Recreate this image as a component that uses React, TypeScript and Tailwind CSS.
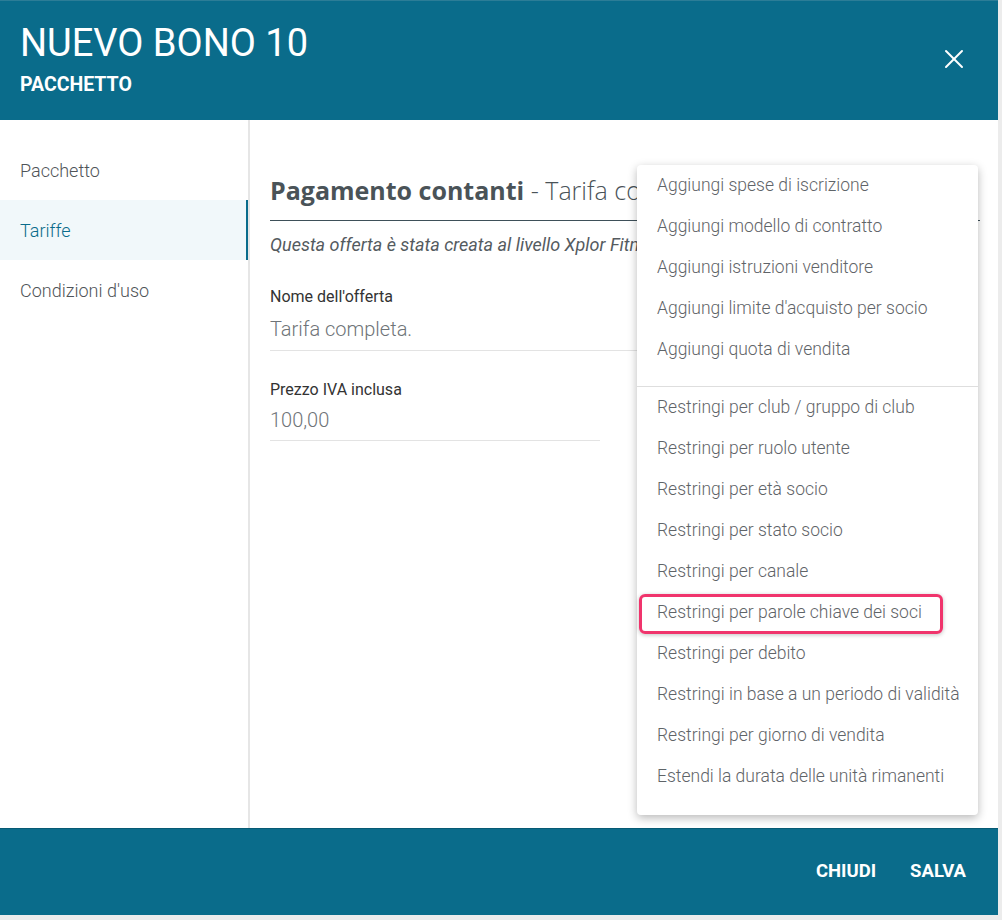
import { X } from 'lucide-react'

const addItems = [
  'Aggiungi spese di iscrizione',
  'Aggiungi modello di contratto',
  'Aggiungi istruzioni venditore',
  "Aggiungi limite d'acquisto per socio",
  'Aggiungi quota di vendita',
]

const restrictItems = [
  'Restringi per club / gruppo di club',
  'Restringi per ruolo utente',
  'Restringi per età socio',
  'Restringi per stato socio',
  'Restringi per canale',
  'Restringi per parole chiave dei soci',
  'Restringi per debito',
  'Restringi in base a un periodo di validità',
  'Restringi per giorno di vendita',
  'Estendi la durata delle unità rimanenti',
]

const navItems = ['Pacchetto', 'Tariffe', "Condizioni d'uso"]

function MenuRow({ label, highlight }: { label: string; highlight?: boolean }) {
  return (
    <div className="relative h-[41px] flex items-center px-5 text-[17.5px] font-light text-[#5f6468] whitespace-nowrap">
      {highlight && (
        <div className="absolute left-[2px] top-[2px] w-[304px] h-[40px] border-[3px] border-[#f0346c] rounded-[6px] shadow-[0_1px_4px_rgba(0,0,0,0.25)]" />
      )}
      <span className="relative">{label}</span>
    </div>
  )
}

export default function App() {
  return (
    <div className="w-[1002px] h-[920px] bg-[#ececec] font-['Roboto',sans-serif]">
      <div className="relative w-[998px] h-[915px] bg-white flex flex-col">
        {/* Header */}
        <div className="h-[120px] bg-[#0a6c8b] border-t border-[#2c7d97] flex justify-between pl-5 pr-7">
          <div className="pt-[20px]">
            <h1 className="text-[38px] leading-[44px] text-white font-normal">NUEVO BONO 10</h1>
            <div className="mt-[9px] text-[19.5px] leading-[22px] font-bold text-white">PACCHETTO</div>
          </div>
          <button className="mt-[42px] h-[32px] text-white">
            <X className="w-[32px] h-[32px]" strokeWidth={1.5} />
          </button>
        </div>

        {/* Body */}
        <div className="flex flex-1">
          <div className="w-[250px] border-r-2 border-[#e6e6e6] pt-5">
            {navItems.map((item) => (
              <div
                key={item}
                className={`h-[60px] flex items-center pl-5 text-[18px] font-light ${
                  item === 'Tariffe'
                    ? 'bg-[#f1f8fa] text-[#0a6c8b] border-r-2 border-[#0a6c8b]'
                    : 'text-[#4f5458]'
                }`}
              >
                {item}
              </div>
            ))}
          </div>

          <div className="flex-1 pl-5 pt-[53px] overflow-hidden">
            <div className="w-[710px] border-b border-[#3e5059] pb-[13px]">
              <h2 className="text-[25px] leading-[34px] text-[#4a5358] whitespace-nowrap font-['Open_Sans',sans-serif]">
                <span className="font-bold">Pagamento contanti</span>
                <span className="font-light"> - Tarifa completa</span>
              </h2>
            </div>
            <p className="mt-[12px] text-[18px] leading-[24px] italic text-[#555b5f] whitespace-nowrap">
              Questa offerta è stata creata al livello Xplor Fitness
            </p>

            <div className="mt-[30px] w-[700px] border-b border-[#e3e3e3] pb-[7px]">
              <div className="text-[16px] leading-[20px] text-[#333]">Nome dell'offerta</div>
              <div className="mt-[8px] text-[20px] leading-[28px] font-light text-[#6f7478]">Tarifa completa.</div>
            </div>

            <div className="mt-[29px] w-[330px] border-b border-[#e3e3e3] pb-[6px]">
              <div className="text-[16px] leading-[20px] text-[#333]">Prezzo IVA inclusa</div>
              <div className="mt-[6px] text-[20px] leading-[28px] font-light text-[#6f7478]">100,00</div>
            </div>
          </div>
        </div>

        {/* Footer */}
        <div className="h-[87px] bg-[#0a6c8b] border-t border-[#075a74] flex items-center justify-end gap-[34px] pr-[32px]">
          <button className="text-[18.5px] font-bold text-white">CHIUDI</button>
          <button className="text-[18.5px] font-bold text-white">SALVA</button>
        </div>

        {/* Dropdown menu */}
        <div className="absolute left-[637px] top-[165px] w-[341px] bg-white rounded-[4px] shadow-[0_3px_10px_rgba(0,0,0,0.28)] pb-[18px]">
          {addItems.map((item) => (
            <MenuRow key={item} label={item} />
          ))}
          <div className="mt-4 border-t border-[#dedede]" />
          {restrictItems.map((item) => (
            <MenuRow key={item} label={item} highlight={item === 'Restringi per parole chiave dei soci'} />
          ))}
        </div>
      </div>
    </div>
  )
}
